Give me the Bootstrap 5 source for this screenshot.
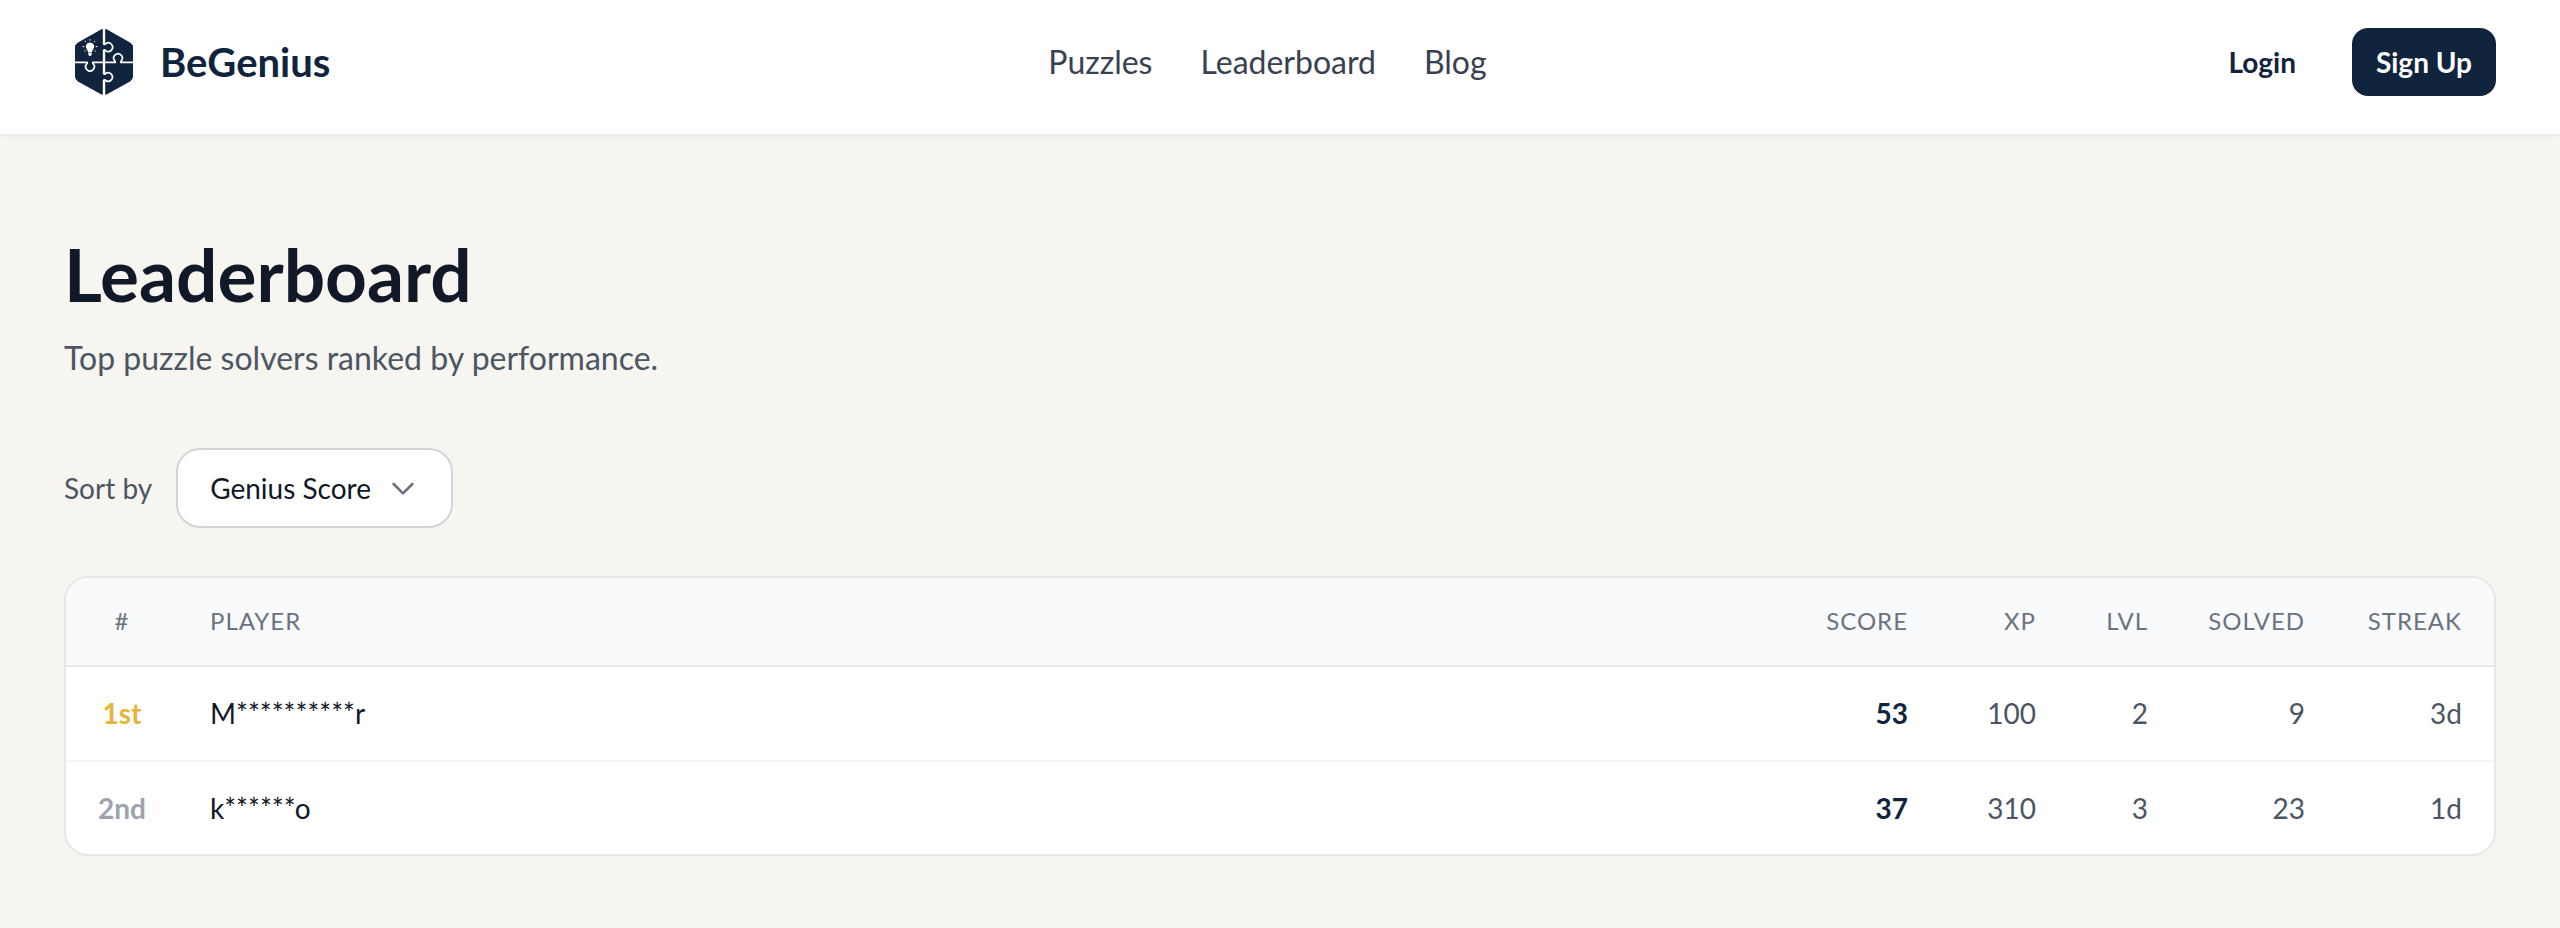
<!DOCTYPE html>
<html lang="en">
<head>
<meta charset="utf-8">
<meta name="viewport" content="width=device-width, initial-scale=1">
<title>Leaderboard - BeGenius</title>
<link href="https://cdn.jsdelivr.net/npm/bootstrap@5.3.0/dist/css/bootstrap.min.css" rel="stylesheet">
<style>
  :root { --navy: #11243e; --ink: #111827; --muted: #4b5563; }
  body { background: #f6f5f0; color: var(--ink); font-family: Lato, "Liberation Sans", sans-serif; font-size: 28px; line-height: 40px; }
  .site-header { padding: 22px 64px 32px; box-shadow: 0 2px 4px rgba(0, 0, 0, .05); }
  .brand-link { gap: 16px; color: var(--navy); font-size: 40px; font-weight: 700; line-height: 56px; }
  .brand-logo { width: 80px; height: 80px; }
  .main-nav { gap: 48px; font-size: 32px; line-height: 48px; }
  .main-nav a { color: #374151; }
  .account { gap: 32px; }
  .account .btn { padding: 14px 24px; border: 0; border-radius: 16px; font-size: 28px; font-weight: 700; line-height: 40px; color: var(--navy); }
  .account .btn-signup { background: var(--navy); color: #fff; }
  .page-body { padding: 96px 64px 72px; }
  h1 { font-size: 73px; font-weight: 700; line-height: 88px; margin-bottom: 16px; }
  .intro { font-size: 32px; line-height: 48px; color: var(--muted); margin-bottom: 66px; }
  .sort-bar { gap: 24px; margin-bottom: 48px; color: var(--muted); }
  .sort-bar .form-select {
    width: auto; height: 80px; padding: 18px 80px 18px 32px; border: 2px solid #d1d5db; border-radius: 24px;
    color: var(--ink); font-size: 28px; line-height: 40px; background-color: #fff;
    background-image: url("data:image/svg+xml,%3Csvg xmlns='http://www.w3.org/2000/svg' viewBox='0 0 24 24' fill='none' stroke='%236b7280' stroke-width='2' stroke-linecap='round' stroke-linejoin='round'%3E%3Cpath d='M19 9l-7 7-7-7'/%3E%3C/svg%3E");
    background-size: 32px 32px; background-position: right 32px center;
  }
  .board { border: 2px solid #e5e7eb; border-radius: 24px; background: #fff; }
  .board table { table-layout: fixed; --bs-table-bg: transparent; }
  .board th, .board td { padding: 26px 32px 27px 24px; text-align: right; white-space: nowrap; color: var(--muted); border-bottom: 2px solid #f3f4f6; }
  .board thead th { padding-top: 23px; padding-bottom: 24px; background: #f9fafc; color: #6b7280; font-size: 24px; font-weight: 400; letter-spacing: 1px; border-color: #e5e7eb; }
  .board tbody tr:last-child > * { padding-bottom: 26px; border-bottom: 0; }
  .board .rank { width: 112px; padding-left: 0; padding-right: 0; text-align: center; }
  .board td.rank { font-weight: 700; }
  .board .player { padding-left: 32px; text-align: left; color: var(--ink); font-weight: 400; }
  .board thead .player { color: #6b7280; }
  .board .gold { color: #e5b43b; }
  .board .silver { color: #9ca3af; }
  .board td.score { color: var(--navy); font-weight: 700; }
  .w-score { width: 160px; }
  .w-xp { width: 128px; }
  .w-lvl { width: 112px; }
  .w-wide { width: 157px; }
</style>
</head>
<body>
<header class="site-header bg-white d-flex align-items-center justify-content-between">
  <a href="#" class="brand-link d-flex align-items-center text-decoration-none">
    <svg class="brand-logo" viewBox="0 0 80 80" aria-hidden="true">
      <path fill="#11243e" d="M37 7.6Q40 6 43 7.6L66 20.6Q69 22.4 69 25.600V54.400Q69 57.600 66 59.400L43 72.200Q40 73.800 37 72.200L14 59.400Q11 57.600 11 54.400V25.600Q11 22.400 14 20.600Z"/>
      <g fill="none" stroke="#fff" stroke-width="1.7">
        <path d="M40 5V22.400Q41 22.700 41.600 21.800A4.300 4.300 0 1 1 41.600 28.600Q41 27.800 40 28V52Q41 52.300 41.600 51.500A4.300 4.300 0 1 1 41.600 58.500Q41 57.700 40 58V75"/>
        <path d="M10 40.400H23.200Q23.400 41.400 22.600 42A4.300 4.300 0 1 0 29.400 42Q28.600 41.400 28.900 40.400H51.200Q51.500 39.400 50.600 38.700A4.300 4.300 0 1 1 57.400 38.700Q56.500 39.400 56.800 40.400H70"/>
      </g>
      <path d="M40 5V22M40 28V52M40 58V75" stroke="#fff" stroke-width="2.400"/>
      <path fill="#fff" d="M26 20.500A4.200 4.200 0 0 0 23 27.700Q24 29 24.100 30.500H27.900Q28 29 29 27.700A4.200 4.200 0 0 0 26 20.500ZM24.300 31.100H27.700V32.800L26.600 34H25.400L24.300 32.800Z"/>
      <path d="M26 17.200V18.700M20.800 19L22 20.200M31.200 19L30 20.200M18.500 24.600H20.300M31.700 24.600H33.500M20.400 29.500L21.600 28.500M31.600 29.500L30.400 28.500" stroke="#fff" stroke-width="1"/>
    </svg>
    <span>BeGenius</span>
  </a>
  <nav class="main-nav d-flex" aria-label="Main">
    <a href="#" class="text-decoration-none">Puzzles</a>
    <a href="#" class="text-decoration-none">Leaderboard</a>
    <a href="#" class="text-decoration-none">Blog</a>
  </nav>
  <div class="account d-flex align-items-center">
    <button type="button" class="btn">Login</button>
    <button type="button" class="btn btn-signup">Sign Up</button>
  </div>
</header>
<main class="page-body">
  <h1>Leaderboard</h1>
  <p class="intro">Top puzzle solvers ranked by performance.</p>
  <div class="sort-bar d-flex align-items-center">
    <label for="sort">Sort by</label>
    <select id="sort" class="form-select">
      <option selected>Genius Score</option>
    </select>
  </div>
  <div class="board overflow-hidden">
    <table class="table mb-0">
      <thead>
        <tr>
          <th scope="col" class="rank">#</th>
          <th scope="col" class="player">PLAYER</th>
          <th scope="col" class="w-score">SCORE</th>
          <th scope="col" class="w-xp">XP</th>
          <th scope="col" class="w-lvl">LVL</th>
          <th scope="col" class="w-wide">SOLVED</th>
          <th scope="col" class="w-wide">STREAK</th>
        </tr>
      </thead>
      <tbody>
        <tr>
          <td class="rank gold">1st</td>
          <td class="player">M**********r</td>
          <td class="score">53</td>
          <td>100</td>
          <td>2</td>
          <td>9</td>
          <td>3d</td>
        </tr>
        <tr>
          <td class="rank silver">2nd</td>
          <td class="player">k******o</td>
          <td class="score">37</td>
          <td>310</td>
          <td>3</td>
          <td>23</td>
          <td>1d</td>
        </tr>
      </tbody>
    </table>
  </div>
</main>
<script src="https://cdn.jsdelivr.net/npm/bootstrap@5.3.0/dist/js/bootstrap.bundle.min.js"></script>
</body>
</html>
